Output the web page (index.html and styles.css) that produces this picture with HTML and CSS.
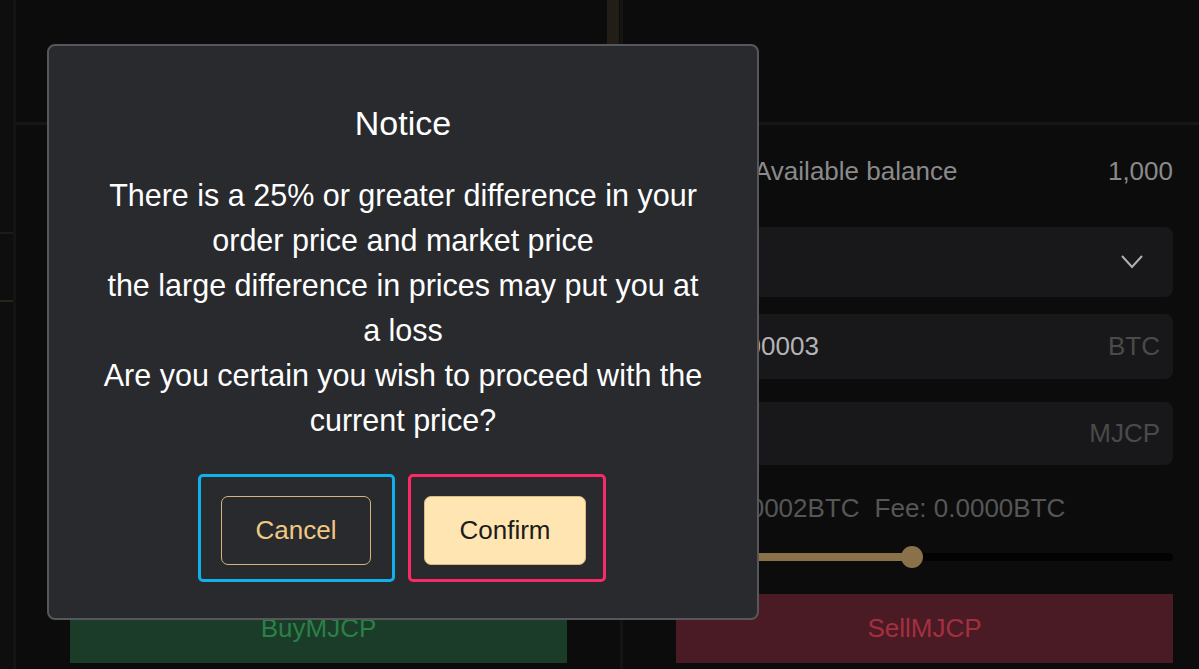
FILE: index.html
```html
<!DOCTYPE html>
<html lang="en">
<head>
  <meta charset="UTF-8">
  <title>Trade - Notice</title>
  <meta name="viewport" content="width=device-width, initial-scale=1.0">
  <link rel="stylesheet" href="styles.css">
</head>
<body>

  <div class="page">
    <!-- Left rail -->
    <aside class="rail">
      <div class="rail-line"></div>
      <div class="rail-line rail-line-gold"></div>
    </aside>

    <!-- Buy panel (form is covered by the dialog) -->
    <section class="panel panel-buy">
      <div class="panel-header">
        <div class="scroll-thumb"></div>
      </div>
      <div class="panel-body">
        <button class="trade-btn buy">BuyMJCP</button>
      </div>
    </section>

    <!-- Sell panel -->
    <section class="panel panel-sell">
      <div class="panel-header"></div>
      <div class="panel-body">
        <div class="balance">
          <span class="balance-label">Available balance</span>
          <span class="balance-value">1,000</span>
        </div>
        <div class="field field-select">
          <svg width="22" height="14" viewBox="0 0 22 14"><path d="M1 1 L11 12 L21 1" fill="none" stroke="#b0b0b0" stroke-width="2"/></svg>
        </div>
        <div class="field field-price">
          <span class="field-value">0.0000003</span>
          <span class="field-unit">BTC</span>
        </div>
        <div class="field field-amount">
          <span class="field-value"></span>
          <span class="field-unit">MJCP</span>
        </div>
        <div class="fee-row">
          <span>Est: 0.0002BTC</span>
          <span>Fee: 0.0000BTC</span>
        </div>
        <div class="slider">
          <div class="slider-track">
            <div class="slider-fill" style="width: 47.5%;"><span class="slider-thumb"></span></div>
          </div>
        </div>
        <button class="trade-btn sell">SellMJCP</button>
      </div>
    </section>
  </div>

  <!-- Notice dialog -->
  <div class="modal">
    <h2 class="modal-title">Notice</h2>
    <p class="modal-text">
      There is a 25% or greater difference in your<br>
      order price and market price<br>
      the large difference in prices may put you at<br>
      a loss<br>
      Are you certain you wish to proceed with the<br>
      current price?
    </p>
    <div class="modal-actions">
      <div class="action action-cancel">
        <button class="btn btn-cancel">Cancel</button>
      </div>
      <div class="action action-confirm">
        <button class="btn btn-confirm">Confirm</button>
      </div>
    </div>
  </div>

</body>
</html>
```

FILE: styles.css
```css
* {
  box-sizing: border-box;
}

body {
  margin: 0;
  background-color: #0c0c0c;
  font-family: "Liberation Sans", Arial, sans-serif;
  height: 669px;
  overflow: hidden;
}

.page {
  display: flex;
  height: 669px;
}

/* left rail */
.rail {
  width: 16px;
  background-color: #0e0e0e;
  border-right: 3px solid #141414;
  padding-top: 232px;
}

.rail-line {
  height: 2px;
  background-color: #1b1b1b;
}

.rail-line-gold {
  margin-top: 66px;
  background-color: #2a2418;
}

/* panels */
.panel {
  display: flex;
  flex-direction: column;
}

.panel-buy {
  width: 607px;
  border-right: 3px solid #141414;
}

.panel-sell {
  flex: 1;
}

.panel-header {
  height: 125px;
  border-bottom: 3px solid #161616;
  display: flex;
  justify-content: flex-end;
}

.scroll-thumb {
  width: 12px;
  margin-right: 1px;
  background-color: #221d16;
}

.panel-body {
  flex: 1;
  display: flex;
  flex-direction: column;
  padding-bottom: 6px;
}

.panel-buy .panel-body {
  padding-left: 54px;
  padding-right: 53px;
  justify-content: flex-end;
}

.panel-sell .panel-body {
  padding-left: 53px;
  padding-right: 26px;
}

.balance {
  margin-top: 26px;
  height: 40px;
  display: flex;
  justify-content: space-between;
  align-items: center;
  font-size: 26px;
  color: #8a8a8a;
}

.balance-label {
  margin-left: 78px;
}

.field {
  background-color: #18181a;
  border-radius: 8px;
  display: flex;
  align-items: center;
  justify-content: space-between;
  padding: 0 13px 0 20px;
  font-size: 26px;
}

.field-select {
  height: 70px;
  margin-top: 36px;
  justify-content: flex-end;
  padding-right: 30px;
}

.field-price {
  height: 65px;
  margin-top: 17px;
}

.field-amount {
  height: 63px;
  margin-top: 23px;
}

.field-value {
  color: #b4b4b4;
}

.field-unit {
  color: #4a4a4a;
}

.fee-row {
  margin-top: 25px;
  height: 36px;
  display: flex;
  align-items: center;
  gap: 15px;
  font-size: 26px;
  color: #565656;
}

.slider {
  margin-top: 15px;
  height: 32px;
  display: flex;
  align-items: center;
}

.slider-track {
  flex: 1;
  height: 8px;
  background-color: #030303;
  border-radius: 4px;
}

.slider-fill {
  position: relative;
  height: 100%;
  background-color: #8b7149;
  border-radius: 4px;
}

.slider-thumb {
  position: absolute;
  right: -11px;
  top: -7px;
  width: 22px;
  height: 22px;
  border-radius: 50%;
  background-color: #8b7149;
}

.trade-btn {
  display: block;
  width: 100%;
  margin-top: 21px;
  height: 69px;
  border: none;
  font-family: inherit;
  font-size: 26px;
}

.buy {
  background-color: #1a3c29;
  color: #2b8047;
}

.sell {
  background-color: #4a1a25;
  color: #a4303f;
}

/* notice dialog */
.modal {
  position: absolute;
  left: 47px;
  top: 44px;
  width: 712px;
  background-color: #292a2e;
  border: 2px solid #56575b;
  border-radius: 8px;
  padding: 57px 0 36px;
  text-align: center;
  color: #ffffff;
}

.modal-title {
  margin: 0;
  font-size: 34px;
  line-height: 40px;
  font-weight: normal;
}

.modal-text {
  margin: 30px 0 0;
  font-size: 30.5px;
  line-height: 45px;
}

.modal-actions {
  margin-top: 31px;
  padding-right: 3px;
  display: flex;
  justify-content: center;
  gap: 13px;
}

.action {
  width: 197px;
  height: 108px;
  border: 3px solid;
  border-radius: 5px;
  display: flex;
  align-items: center;
  justify-content: center;
  padding-top: 5px;
}

.action-cancel {
  border-color: #0fb0ec;
}

.action-confirm {
  width: 198px;
  padding-right: 3px;
  border-color: #fb2a66;
}

.btn {
  height: 69px;
  padding: 0 34px;
  border: 1.5px solid;
  border-radius: 7px;
  font-family: inherit;
  font-size: 26px;
}

.btn-cancel {
  background-color: transparent;
  color: #efc983;
  border-color: #d5b477;
}

.btn-confirm {
  background-color: #ffe5b1;
  color: #1c1c1c;
  border-color: #d9ba7c;
}
```
